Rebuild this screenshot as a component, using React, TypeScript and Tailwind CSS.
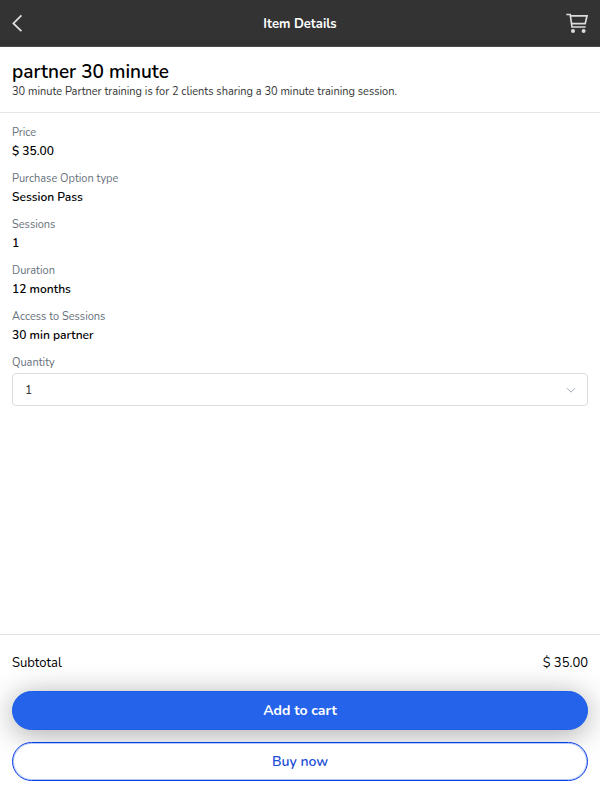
import { useState } from "react";

const PRICE = 35;

const details = [
   { label: "Price", value: "$ 35.00" },
   { label: "Purchase Option type", value: "Session Pass" },
   { label: "Sessions", value: "1" },
   { label: "Duration", value: "12 months" },
   { label: "Access to Sessions", value: "30 min partner" },
];

function BackIcon() {
   return (
      <svg
         className="h-5 w-5"
         viewBox="0 0 20 20"
         fill="none"
         stroke="currentColor"
         strokeWidth="1.8"
         aria-hidden="true"
      >
         <path d="M9.4 2.4 1.4 10.4 9.4 18.2" />
      </svg>
   );
}

function CartIcon() {
   return (
      <svg
         className="h-5 w-[22px]"
         viewBox="0 0 22 20"
         fill="none"
         stroke="currentColor"
         strokeWidth="1.7"
         aria-hidden="true"
      >
         <path d="M0.3 1.5H4.2L6 14H19.6" />
         <path d="M4.4 2.9H21L19.2 10.7H5.6" />
         <circle cx="7" cy="18" r="2" fill="currentColor" stroke="none" />
         <circle cx="17.6" cy="18" r="2" fill="currentColor" stroke="none" />
      </svg>
   );
}

function ChevronIcon() {
   return (
      <svg
         className="pointer-events-none absolute top-3 right-3 h-2.5 w-2.5 text-[#a3abb3]"
         viewBox="0 0 10 10"
         fill="none"
         stroke="currentColor"
         aria-hidden="true"
      >
         <path d="M1 3.2 5 7.2 9 3.2" />
      </svg>
   );
}

export default function App() {
   const [quantity, setQuantity] = useState(1);

   return (
      <div className="flex min-h-screen flex-col bg-white font-[Nunito,'Noto_Sans',sans-serif] text-black">
         <header className="grid h-[47px] grid-cols-[1fr_auto_1fr] items-center border-b border-[#4a4a4a] bg-[#333] px-3 text-[#dcdcdc]">
            <button type="button" aria-label="Back" className="justify-self-start">
               <BackIcon />
            </button>
            <h1 className="pt-1 text-[13px] font-bold text-white">Item Details</h1>
            <button type="button" aria-label="Cart" className="justify-self-end">
               <CartIcon />
            </button>
         </header>

         <section className="border-b border-[#e6e6e6] px-3 pt-[13px] pb-3">
            <h2 className="text-[19px] leading-6 font-semibold">partner 30 minute</h2>
            <p className="text-[11px] leading-4 text-[#333]">
               30 minute Partner training is for 2 clients sharing a 30 minute
               training session.
            </p>
         </section>

         <main className="flex-1 px-3 pt-3">
            <dl>
               {details.map(({ label, value }) => (
                  <div key={label} className="mb-2.5">
                     <dt className="text-[11px] leading-4 text-[#67717b]">{label}</dt>
                     <dd className="text-xs leading-5 font-semibold">{value}</dd>
                  </div>
               ))}
            </dl>

            <label htmlFor="quantity" className="block text-[11px] leading-4 text-[#67717b]">
               Quantity
            </label>
            <div className="relative mt-0.5">
               <select
                  id="quantity"
                  value={quantity}
                  onChange={(e) => setQuantity(Number(e.target.value))}
                  className="h-[33px] w-full appearance-none rounded border border-[#dadee3] bg-white px-3 text-xs text-[#222]"
               >
                  {[1, 2, 3, 4, 5].map((n) => (
                     <option key={n} value={n}>
                        {n}
                     </option>
                  ))}
               </select>
               <ChevronIcon />
            </div>
         </main>

         <footer className="border-t border-[#e0e0e0] px-3 pt-4 pb-[19px]">
            <div className="flex justify-between text-[13px] leading-6">
               <span>Subtotal</span>
               <span>$ {(PRICE * quantity).toFixed(2)}</span>
            </div>
            <button
               type="button"
               className="mt-4 h-[39px] w-full rounded-full border border-[#1a5fe8] bg-[#2563eb] text-sm font-bold text-white shadow-[0_4px_30px_rgba(0,0,0,0.35)]"
            >
               Add to cart
            </button>
            <button
               type="button"
               className="relative mt-3 h-[39px] w-full rounded-full border border-[#0b3fe6] bg-white text-sm font-semibold text-[#1d4ed8] inset-shadow-[0_0_0_1px_rgba(37,99,235,0.35)]"
            >
               Buy now
            </button>
         </footer>
      </div>
   );
}
